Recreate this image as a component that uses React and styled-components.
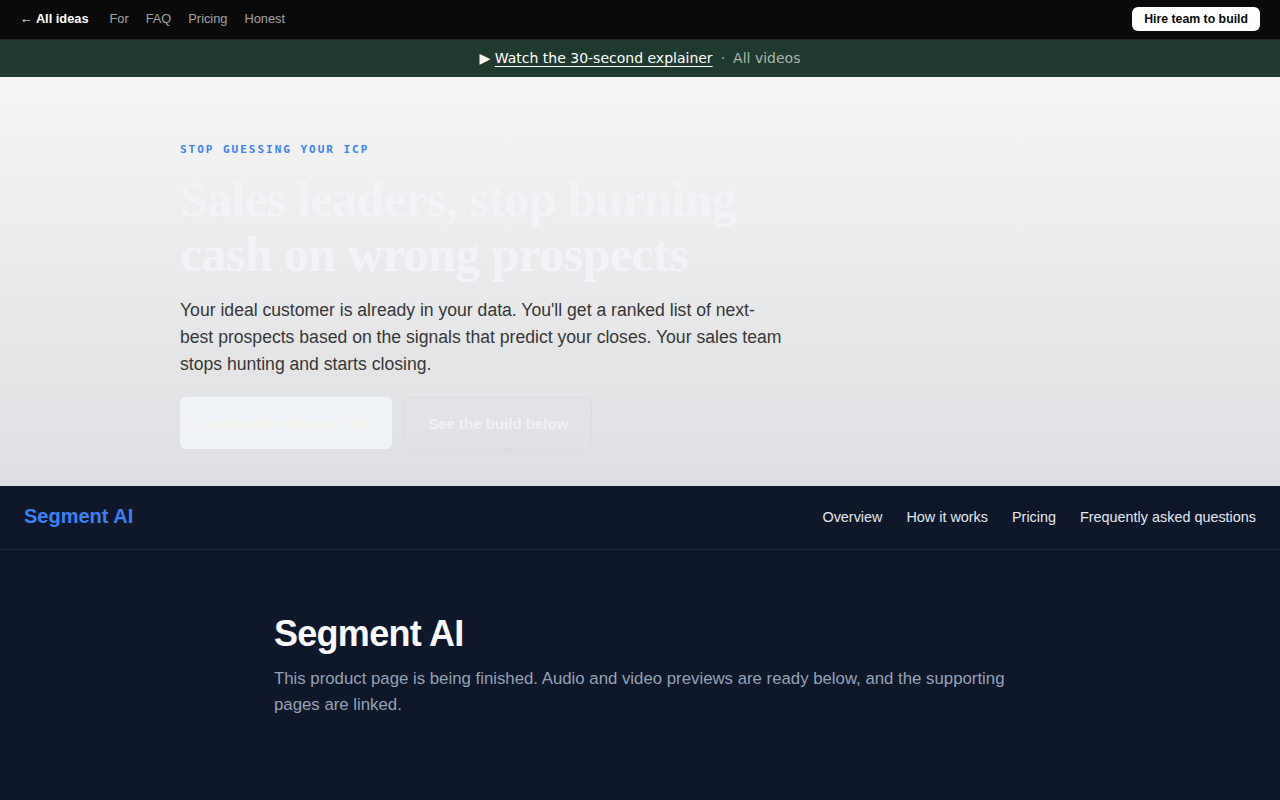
import React from 'react';
import styled, { createGlobalStyle } from 'styled-components';

const GlobalStyle = createGlobalStyle`
  * { box-sizing: border-box; }
  body {
    margin: 0;
    font-family: 'Liberation Sans', Arial, sans-serif;
    background: #0f172a;
  }
  a { text-decoration: none; color: inherit; }
`;

const TopBar = styled.header`
  height: 40px;
  background: #0a0a0a;
  border-bottom: 1px solid #262626;
  display: flex;
  align-items: center;
  justify-content: space-between;
  padding: 0 20px 2px;
`;

const TopLinks = styled.nav`
  display: flex;
  align-items: center;
  gap: 17px;
  font-size: 12.8px;
  color: #a3a3a3;

  .home {
    color: #fff;
    font-weight: 700;
    margin-right: 4px;
  }
`;

const HireButton = styled.a`
  background: #fff;
  color: #0a0a0a;
  font-size: 12.3px;
  font-weight: 700;
  height: 24px;
  padding: 0 12px;
  border-radius: 6px;
  display: flex;
  align-items: center;
`;

const Banner = styled.div`
  height: 37px;
  background: #1f3a2e;
  display: flex;
  align-items: center;
  justify-content: center;
  font-family: 'DejaVu Sans', sans-serif;
  font-size: 14px;
  color: #fff;
  gap: 8px;
  padding-bottom: 1px;

  .watch {
    text-decoration: underline;
    text-underline-offset: 3px;
  }
  .dot,
  .all {
    color: #a9b7b0;
  }
`;

const Hero = styled.section`
  background: linear-gradient(180deg, #f5f5f5 0%, #dddee1 100%);
  padding: 66px 0 37px;
`;

const Container = styled.div`
  max-width: ${(p) => p.$width}px;
  margin: 0 auto;
`;

const Eyebrow = styled.p`
  margin: 0 0 16px;
  font-family: 'DejaVu Sans Mono', monospace;
  font-weight: 700;
  font-size: 11px;
  letter-spacing: 0.18em;
  color: #3b82f6;
`;

const HeroTitle = styled.h1`
  margin: 0 0 15px;
  max-width: 608px;
  font-family: 'Liberation Serif', 'Times New Roman', serif;
  font-weight: 700;
  font-size: 50px;
  line-height: 55px;
  letter-spacing: -0.012em;
  color: #f1f3f7;
`;

const HeroText = styled.p`
  margin: 0 0 19px;
  max-width: 608px;
  font-size: 17.6px;
  line-height: 27px;
  color: #363636;
`;

const Actions = styled.div`
  display: flex;
  gap: 12px;
`;

const Button = styled.a`
  height: 52px;
  padding: 0 23px;
  border-radius: 6px;
  display: flex;
  align-items: center;
  font-size: 15px;
  font-weight: 700;
  background: ${(p) => (p.$primary ? '#eff3f8' : 'transparent')};
  color: ${(p) => (p.$primary ? '#f6f4ec' : '#eef0f5')};
  border: 1px solid ${(p) => (p.$primary ? '#eff3f8' : '#dadbde')};
`;

const ProductNav = styled.nav`
  height: 64px;
  border-bottom: 1px solid #1e293b;
  display: flex;
  align-items: center;
  justify-content: space-between;
  padding: 0 24px 2px;
`;

const Brand = styled.a`
  font-size: 20px;
  font-weight: 700;
  color: #3b82f6;
`;

const ProductLinks = styled.div`
  display: flex;
  gap: 24px;
  font-size: 14.4px;
  color: #e2e8f0;
`;

const Intro = styled.section`
  padding: 62px 0 80px;
`;

const IntroTitle = styled.h2`
  margin: 0 0 10px;
  font-size: 36px;
  line-height: 44px;
  font-weight: 700;
  letter-spacing: -0.02em;
  color: #f8fafc;
`;

const IntroText = styled.p`
  margin: 0;
  font-size: 16.8px;
  line-height: 26px;
  color: #94a3b8;
`;

export default function App() {
  return (
    <>
      <GlobalStyle />
      <TopBar>
        <TopLinks>
          <a className="home" href="#">← All ideas</a>
          <a href="#">For</a>
          <a href="#">FAQ</a>
          <a href="#">Pricing</a>
          <a href="#">Honest</a>
        </TopLinks>
        <HireButton href="#">Hire team to build</HireButton>
      </TopBar>
      <Banner>
        <span>▶ <a className="watch" href="#">Watch the 30-second explainer</a></span>
        <span className="dot">·</span>
        <a className="all" href="#">All videos</a>
      </Banner>
      <Hero>
        <Container $width={920}>
          <Eyebrow>STOP GUESSING YOUR ICP</Eyebrow>
          <HeroTitle>Sales leaders, stop burning cash on wrong prospects</HeroTitle>
          <HeroText>
            Your ideal customer is already in your data. You'll get a ranked list of next-best
            prospects based on the signals that predict your closes. Your sales team stops
            hunting and starts closing.
          </HeroText>
          <Actions>
            <Button $primary href="#">Unlock the dossier · $5</Button>
            <Button href="#">See the build below</Button>
          </Actions>
        </Container>
      </Hero>
      <ProductNav>
        <Brand href="#">Segment AI</Brand>
        <ProductLinks>
          <a href="#">Overview</a>
          <a href="#">How it works</a>
          <a href="#">Pricing</a>
          <a href="#">Frequently asked questions</a>
        </ProductLinks>
      </ProductNav>
      <Intro>
        <Container $width={732}>
          <IntroTitle>Segment AI</IntroTitle>
          <IntroText>
            This product page is being finished. Audio and video previews are ready below, and
            the supporting pages are linked.
          </IntroText>
        </Container>
      </Intro>
    </>
  );
}
